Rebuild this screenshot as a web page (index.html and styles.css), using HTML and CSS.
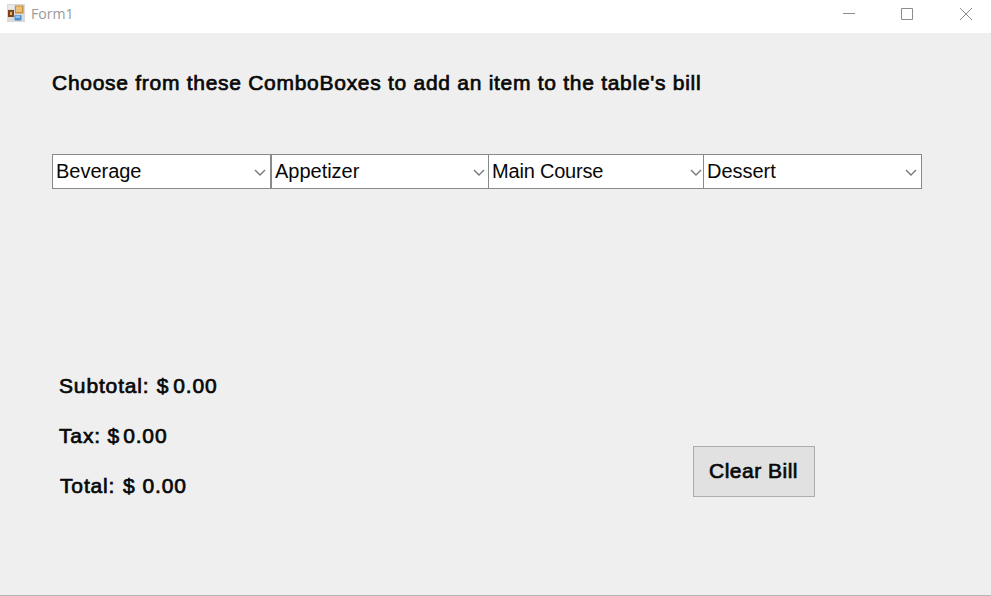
FILE: index.html
```html
<!DOCTYPE html>
<html lang="en">
<head>
<meta charset="utf-8">
<title>Form1</title>
<link rel="stylesheet" href="styles.css">
</head>
<body>
<div class="window">
  <header class="titlebar">
    <svg class="app-icon" width="18" height="18" viewBox="0 0 18 18">
      <rect width="18" height="18" fill="#d9d9dc"/>
      <rect x="1" y="1" width="6" height="4" fill="#e9e9ec"/>
      <rect x="8" y="1.5" width="8.5" height="8" fill="#c9913f"/>
      <rect x="9" y="2.5" width="6" height="5.5" fill="#e9c078"/>
      <rect x="1" y="6" width="6" height="7" fill="#7c4415"/>
      <rect x="3" y="8" width="2" height="3" fill="#e3b27a"/>
      <rect x="7.5" y="11" width="7" height="5.5" rx="1" fill="#4b8fce"/>
      <rect x="8.5" y="11.5" width="4.5" height="2.5" fill="#93c4ee"/>
    </svg>
    <span class="caption">Form1</span>
    <div class="controls">
      <svg width="12" height="12" viewBox="0 0 12 12"><path d="M0 5.5H12"/></svg>
      <svg width="12" height="12" viewBox="0 0 12 12"><path d="M.5 .5H11.5V11.5H.5Z"/></svg>
      <svg width="12" height="12" viewBox="0 0 12 12"><path d="M0 0L12 12M12 0L0 12"/></svg>
    </div>
  </header>
  <main class="form">
    <h1 class="prompt strong">Choose from these ComboBoxes to add an item to the table's bill</h1>
    <div class="combos">
      <div class="combo"><span>Beverage</span><svg width="12" height="8" viewBox="0 0 12 8"><path d="M1 1L6 6L11 1"/></svg></div>
      <div class="combo"><span>Appetizer</span><svg width="12" height="8" viewBox="0 0 12 8"><path d="M1 1L6 6L11 1"/></svg></div>
      <div class="combo course"><span>Main Course</span><svg width="12" height="8" viewBox="0 0 12 8"><path d="M1 1L6 6L11 1"/></svg></div>
      <div class="combo"><span>Dessert</span><svg width="12" height="8" viewBox="0 0 12 8"><path d="M1 1L6 6L11 1"/></svg></div>
    </div>
    <div class="footer">
      <div class="totals strong">
        <div class="line subtotal"><span>Subtotal: $</span><span>0.00</span></div>
        <div class="line tax"><span>Tax: $</span><span>0.00</span></div>
        <div class="line total"><span>Total: $</span><span>0.00</span></div>
      </div>
      <button class="clear strong">Clear Bill</button>
    </div>
  </main>
</div>
</body>
</html>
```
FILE: styles.css
```css
* { box-sizing: border-box; }
body { margin: 0; overflow: hidden; }
.window {
  width: 991px;
  height: 596px;
  display: flex;
  flex-direction: column;
  background: #efefef;
  border-bottom: 1px solid #b5b5b5;
  font-family: "Liberation Sans", Arial, sans-serif;
  font-size: 20px;
  color: #080808;
}
.titlebar {
  height: 33px;
  flex: none;
  display: flex;
  padding: 4px 19px 0 7px;
  background: #fff;
}
.app-icon { flex: none; }
.caption {
  margin-left: 6px;
  font: 14.1px/20px "Open Sans", sans-serif;
  color: #999;
}
.controls {
  margin: 4px 0 0 auto;
  display: flex;
  gap: 46px;
}
.controls svg { fill: none; stroke: #8c8c8c; stroke-width: 1; }
.controls svg:last-child { margin-left: 1px; }
.form { padding: 38px 0 0 52px; }
.strong {
  font-size: 21px;
  font-weight: 400;
  letter-spacing: 0.72px;
  -webkit-text-stroke: 0.7px #080808;
}
.prompt {
  margin: 0;
  line-height: 24px;
  white-space: nowrap;
}
.combos {
  width: 870px;
  height: 35px;
  margin-top: 59px;
  display: grid;
  grid-template-columns: 219px 217px 215px 219px;
  border: solid #868a88;
  border-width: 1px 0;
}
.combo {
  display: flex;
  align-items: center;
  justify-content: space-between;
  padding: 0 4px 0 3px;
  background: #fff;
  border-left: 1px solid #868a88;
  letter-spacing: -0.02px;
}
.combo:first-child, .combo:last-child { border-right: 1px solid #868a88; }
.combo:nth-child(2) { padding-right: 3px; }
.combo.course { padding: 0 1px 0 3px; letter-spacing: -0.2px; }
.combo svg { margin-top: 3px; fill: none; stroke: #777; stroke-width: 1.4; }
.footer {
  display: flex;
  padding: 185px 0 0 7px;
}
.totals { width: 634px; letter-spacing: 0.85px; }
.line {
  display: flex;
  height: 50px;
  line-height: 24px;
  gap: 4px;
}
.subtotal { word-spacing: 0.5px; }
.tax { gap: 3px; }
.total { gap: 7px; padding-left: 1px; word-spacing: 1px; }
.clear {
  width: 122px;
  height: 51px;
  margin-top: 72px;
  padding: 0 1px 2px 0;
  background: #e1e1e1;
  border: 1px solid #adadad;
  font-family: inherit;
  letter-spacing: 0.5px;
  color: inherit;
}
```
